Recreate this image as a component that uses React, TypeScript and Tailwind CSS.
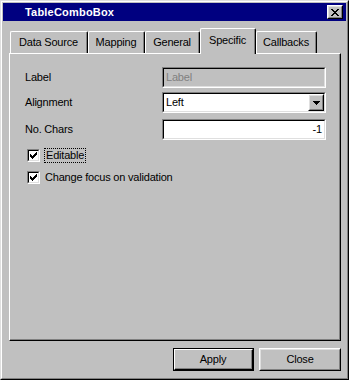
import React from "react";

const FONT = "font-['Liberation_Sans',Arial,sans-serif]";

// 3D frame helpers, classic Windows style
function Sunken({ className = "", inner = "bg-white", children }: { className?: string; inner?: string; children?: React.ReactNode }) {
  return (
    <div className={`border border-t-[#808080] border-l-[#808080] border-r-white border-b-white ${className}`}>
      <div className={`w-full h-full border border-t-black border-l-black border-r-[#dfdfdf] border-b-[#dfdfdf] ${inner}`}>
        {children}
      </div>
    </div>
  );
}

function Raised({ className = "", children }: { className?: string; children?: React.ReactNode }) {
  return (
    <div className={`border border-t-white border-l-white border-r-black border-b-black bg-[#c0c0c0] ${className}`}>
      <div className="w-full h-full border border-t-[#dfdfdf] border-l-[#dfdfdf] border-r-[#808080] border-b-[#808080] flex items-center justify-center">
        {children}
      </div>
    </div>
  );
}

function PixelGlyph({ rows }: { rows: string[] }) {
  const w = rows[0].length;
  const h = rows.length;
  return (
    <svg width={w} height={h} viewBox={`0 0 ${w} ${h}`} shapeRendering="crispEdges">
      {rows.map((r, y) =>
        r.split("").map((c, x) => (c === "x" ? <rect key={`${x}-${y}`} x={x} y={y} width="1" height="1" fill="#000" /> : null))
      )}
    </svg>
  );
}

const CLOSE = ["xx....xx", ".xx..xx.", "..xxxx..", "...xx...", "..xxxx..", ".xx..xx.", "xx....xx"];
const CHECK = ["......x", ".....xx", "x...xxx", "xx.xxx.", "xxxxx..", ".xxx...", "..x...."];
const ARROW = ["xxxxxxx", ".xxxxx.", "..xxx..", "...x..."];

function Checkbox() {
  return (
    <Sunken className="w-[13px] h-[13px] shrink-0">
      <div className="p-[1px]">
        <PixelGlyph rows={CHECK} />
      </div>
    </Sunken>
  );
}

const tabs = [
  { name: "Data Source", w: "w-[78px]" },
  { name: "Mapping", w: "w-[57px]" },
  { name: "General", w: "w-[55px]" },
  { name: "Specific", w: "w-[56px]", active: true },
  { name: "Callbacks", w: "w-[61px]" },
];

export default function App() {
  return (
    <div className={`w-[349px] h-[380px] bg-[#c0c0c0] text-[11px] tracking-[-0.2px] text-black ${FONT}`}>
      <div className="w-full h-full border border-t-[#dfdfdf] border-l-[#dfdfdf] border-r-black border-b-black">
        <div className="w-full h-full border border-t-white border-l-white border-r-[#808080] border-b-[#808080] p-[1px] flex flex-col">
          {/* Title bar */}
          <div className="h-[18px] bg-[#000080] flex items-center pl-[22px] pr-[3px]">
            <span className="text-white font-bold text-[11px] tracking-[0.2px] flex-1 leading-none">TableComboBox</span>
            <Raised className="w-[16px] h-[14px]">
              <PixelGlyph rows={CLOSE} />
            </Raised>
          </div>

          {/* Tabs */}
          <div className="mt-[7px] h-[25px] flex items-end pl-[7px]">
            {tabs.map((t) =>
              t.active ? (
                <div
                  key={t.name}
                  className={`${t.w} h-[26px] -mb-[1px] relative z-10 bg-[#c0c0c0] border-l border-t border-r border-l-white border-t-white border-r-black rounded-tl-[2px] rounded-tr-[2px]`}
                >
                  <div className="w-full h-full border-r border-r-[#808080] flex items-center justify-center pb-[2px]">{t.name}</div>
                </div>
              ) : (
                <div
                  key={t.name}
                  className={`${t.w} h-[22px] border-l border-t border-r border-l-white border-t-white border-r-black rounded-tl-[2px] rounded-tr-[2px]`}
                >
                  <div className="w-full h-full border-r border-r-[#808080] flex items-center justify-center">{t.name}</div>
                </div>
              )
            )}
          </div>

          {/* Panel */}
          <div className="ml-[6px] w-[332px] h-[288px] border border-t-white border-l-white border-r-black border-b-black">
            <div className="w-full h-full border-r border-b border-r-[#808080] border-b-[#808080] pl-[15px] pt-[13px] flex flex-col">
              <div className="flex items-center h-[21px]">
                <span className="w-[137px]">Label</span>
                <Sunken className="w-[164px] h-[21px]" inner="bg-[#c0c0c0]">
                  <div className="h-full flex items-center pl-[2px] text-[#808080]">Label</div>
                </Sunken>
              </div>
              <div className="flex items-center h-[21px] mt-[4px]">
                <span className="w-[137px]">Alignment</span>
                <Sunken className="w-[164px] h-[21px]">
                  <div className="h-full flex items-center">
                    <span className="flex-1 pl-[2px]">Left</span>
                    <Raised className="w-[16px] h-full">
                      <PixelGlyph rows={ARROW} />
                    </Raised>
                  </div>
                </Sunken>
              </div>
              <div className="flex items-center h-[21px] mt-[6px]">
                <span className="w-[137px]">No. Chars</span>
                <Sunken className="w-[164px] h-[21px]">
                  <div className="h-full flex items-center justify-end pr-[2px]">-1</div>
                </Sunken>
              </div>
              <div className="flex items-center h-[16px] mt-[7px] pl-[2px]">
                <Checkbox />
                <span className="ml-[4px] px-[1px] border border-dotted border-black leading-[13px]">Editable</span>
              </div>
              <div className="flex items-center h-[16px] mt-[6px] pl-[2px]">
                <Checkbox />
                <span className="ml-[5px] leading-[13px]">Change focus on validation</span>
              </div>
            </div>
          </div>

          {/* Buttons */}
          <div className="mt-[7px] flex pl-[170px]">
            <div className="w-[81px] h-[23px] border border-black">
              <div className="w-full h-full border border-t-white border-l-white border-r-black border-b-black">
                <div className="w-full h-full border-r border-b border-r-[#808080] border-b-[#808080] flex items-center justify-center">
                  Apply
                </div>
              </div>
            </div>
            <Raised className="w-[82px] h-[23px] ml-[5px]">Close</Raised>
          </div>
        </div>
      </div>
    </div>
  );
}
